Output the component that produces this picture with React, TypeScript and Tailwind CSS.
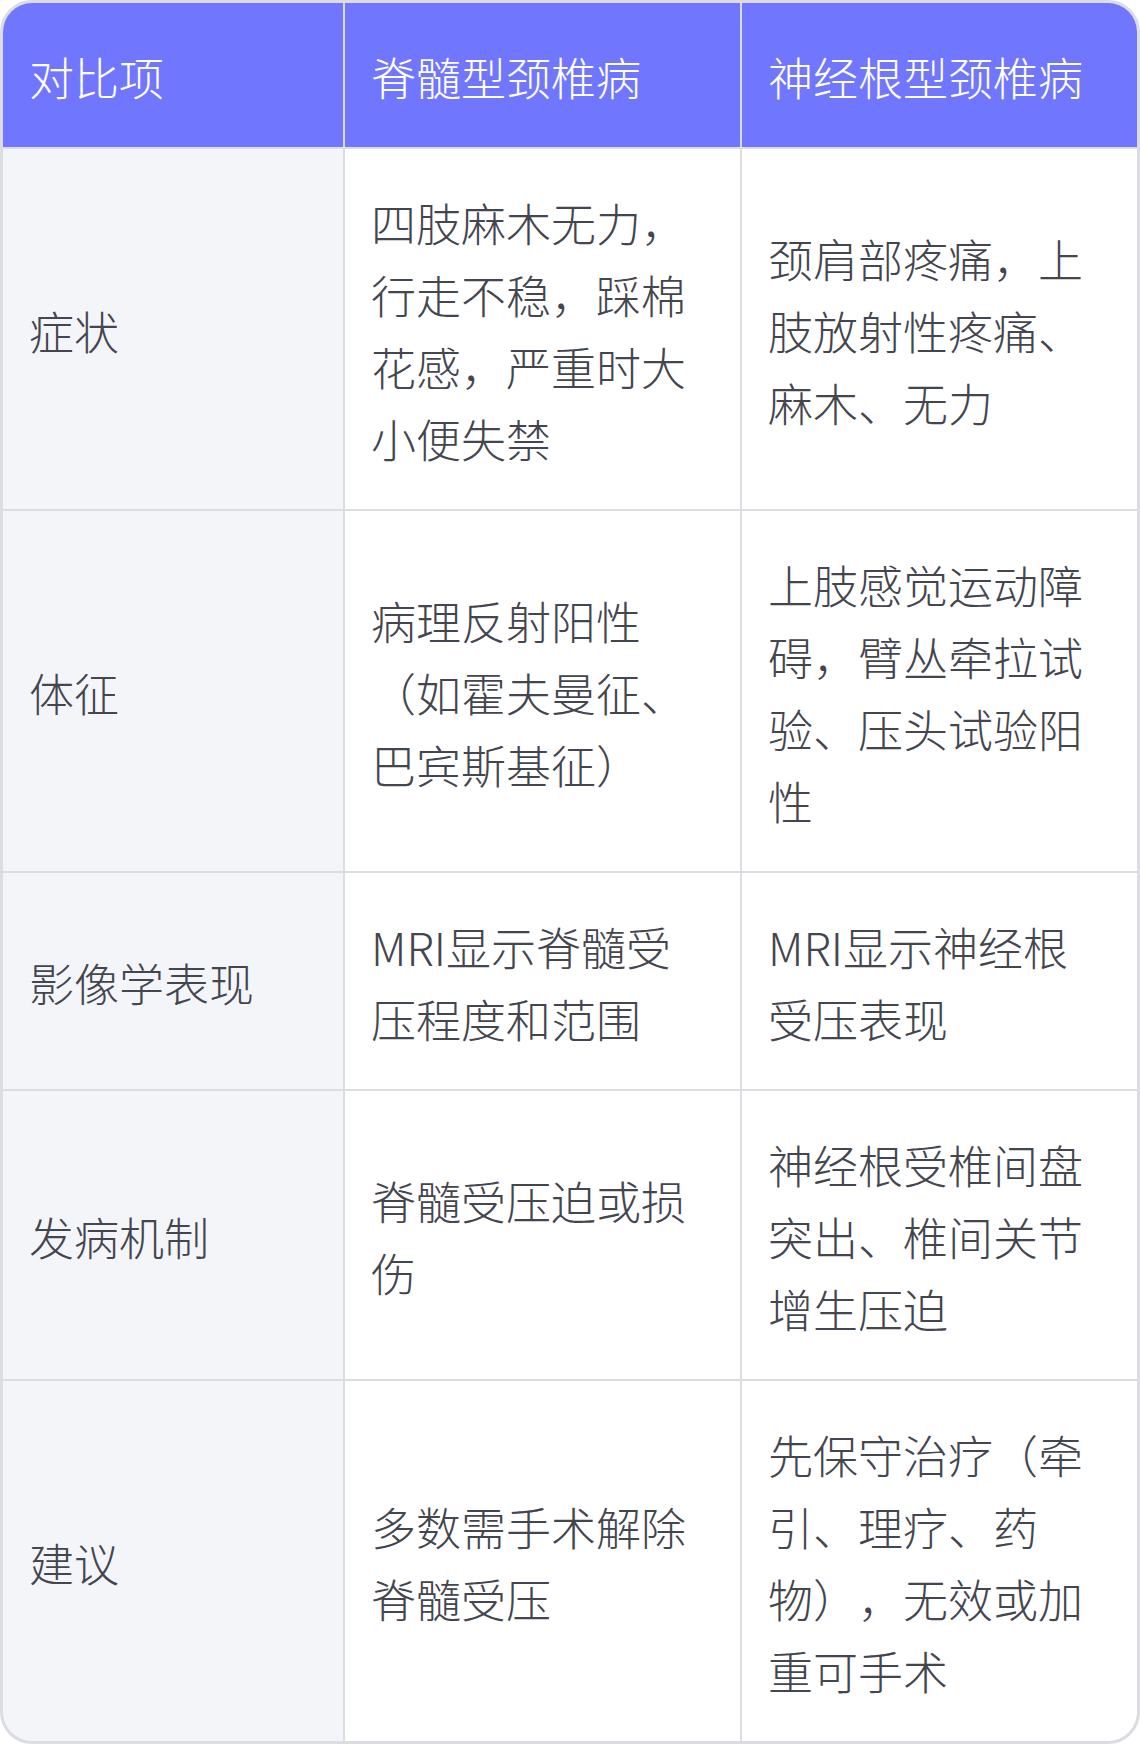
import React from "react";

const rows: [string, string, string][] = [
  ["症状", "四肢麻木无力，行走不稳，踩棉花感，严重时大小便失禁", "颈肩部疼痛，上肢放射性疼痛、麻木、无力"],
  ["体征", "病理反射阳性（如霍夫曼征、巴宾斯基征）", "上肢感觉运动障碍，臂丛牵拉试验、压头试验阳性"],
  ["影像学表现", "MRI显示脊髓受压程度和范围", "MRI显示神经根受压表现"],
  ["发病机制", "脊髓受压迫或损伤", "神经根受椎间盘突出、椎间关节增生压迫"],
  ["建议", "多数需手术解除脊髓受压", "先保守治疗（牵引、理疗、药物），无效或加重可手术"],
];

const font = { fontFamily: '"Noto Sans CJK SC", "Noto Sans", sans-serif' };

export default function App() {
  return (
    <div className="w-[1140px] bg-white" style={font}>
      <div className="rounded-[32px] border-[3px] border-[#dcdde2] overflow-hidden bg-[#dcdde2]">
        <div className="grid grid-cols-[340px_395px_395px] gap-[2px] font-light text-[45px] leading-[72px] [text-spacing-trim:space-all]">
          {["对比项", "脊髓型颈椎病", "神经根型颈椎病"].map((h) => (
            <div key={h} className="bg-[#7176fe] text-white pl-[26px] pr-[28px] pt-[38px] pb-[34px] flex items-center">
              {h}
            </div>
          ))}
          {rows.map((r) => (
            <React.Fragment key={r[0]}>
              <div className="bg-[#f4f5f9] text-[#43454f] pl-[26px] pr-[28px] pt-[38px] pb-[34px] flex items-center">{r[0]}</div>
              <div className="bg-white text-[#43454f] pl-[26px] pr-[28px] pt-[38px] pb-[34px] flex items-center">{r[1]}</div>
              <div className="bg-white text-[#43454f] pl-[26px] pr-[28px] pt-[38px] pb-[34px] flex items-center">{r[2]}</div>
            </React.Fragment>
          ))}
        </div>
      </div>
    </div>
  );
}
